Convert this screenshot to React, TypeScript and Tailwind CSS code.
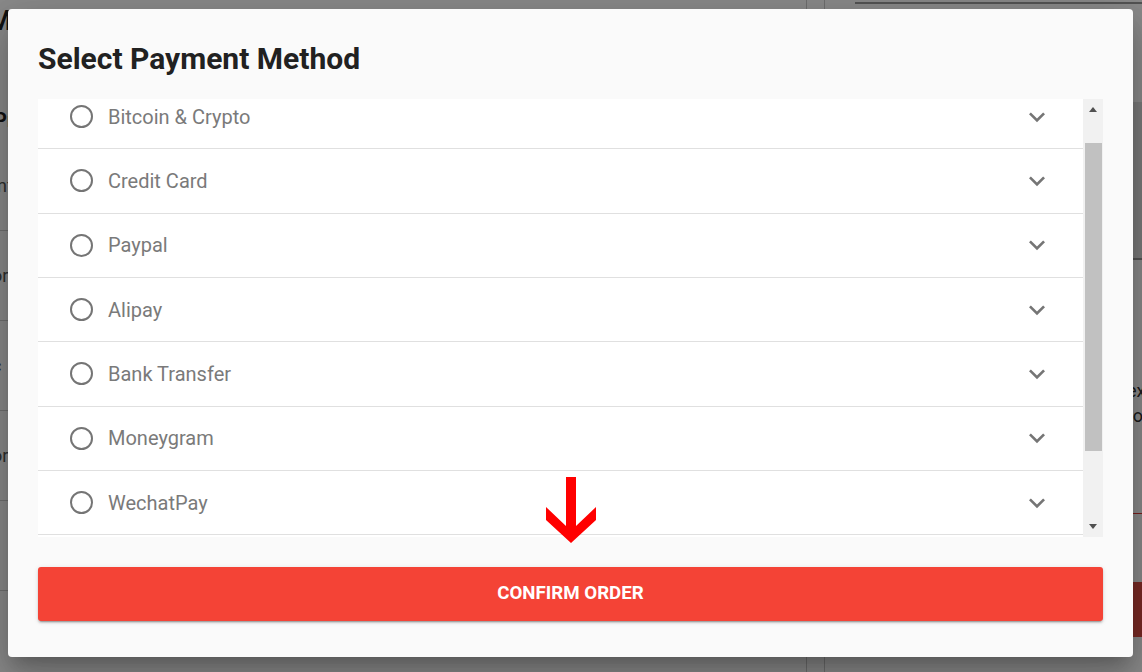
import React from "react";

const methods = [
  "Bitcoin & Crypto",
  "Credit Card",
  "Paypal",
  "Alipay",
  "Bank Transfer",
  "Moneygram",
  "WechatPay",
  "Western Union",
];

function Chevron() {
  return (
    <svg width="32" height="32" viewBox="0 0 24 24" className="shrink-0">
      <path d="M16.59 8.59L12 13.17 7.41 8.59 6 10l6 6 6-6z" fill="#757575" />
    </svg>
  );
}

function Row({ label }: { label: string }) {
  return (
    <div className="h-[64.33px] shrink-0 flex items-center bg-white border-b border-[#e0e0e0] pl-[32px] pr-[30px]">
      <div className="w-[23px] h-[23px] rounded-full border-2 border-[#757575] shrink-0" />
      <span className="ml-[15px] flex-1 text-[20px] text-[#7a7a7a] leading-none">{label}</span>
      <Chevron />
    </div>
  );
}

function BackgroundPage() {
  const leftRows = ["or", "c", "or", "t", "-", "x"];
  return (
    <div className="w-[1142px] h-[672px] bg-white flex overflow-hidden text-[#212121]">
      <div className="w-[807px] shrink-0 flex flex-col border-r border-[#cccccc]">
        <div className="h-[40px] shrink-0 flex items-center pt-[2px] -ml-[12px] text-[28px] font-bold">Ma commande</div>
        <div className="h-[60px] shrink-0" />
        <div className="h-[40px] shrink-0 flex items-center -ml-[6px] text-[20px] font-bold">Products</div>
        <div className="h-[90px] shrink-0 flex items-center -ml-[8px] text-[18px] text-[#555]">Info</div>
        {leftRows.map((t, i) => (
          <div key={i} className="h-[90px] shrink-0 flex items-center -ml-[8px] border-t border-[#cfcfcf] text-[18px] text-[#555]">
            {t}
          </div>
        ))}
      </div>
      <div className="w-[18px] shrink-0 border-r border-[#cccccc]" />
      <div className="flex-1 flex flex-col">
        <div className="h-[102px] shrink-0 pl-[30px] pt-[2px]">
          <div className="border-t-2 border-[#999]" />
        </div>
        <div className="h-[158px] shrink-0 bg-[#e4e4e4] border-b-2 border-[#999]" />
        <div className="h-[118px] shrink-0" />
        <div className="shrink-0 pl-[302px] text-[18px] leading-[25px] text-[#333]">
          <div>ex</div>
          <div>to</div>
        </div>
        <div className="h-[86px] shrink-0 border-b border-[#e53935]" />
        <div className="h-[68px] shrink-0" />
        <div className="h-[55px] shrink-0 bg-[#e24e45]" />
      </div>
    </div>
  );
}

export default function App() {
  return (
    <div className="relative w-[1142px] h-[672px] overflow-hidden font-['Roboto',sans-serif]">
      <BackgroundPage />
      <div className="absolute inset-0 bg-black/[0.46]" />
      <div className="absolute left-[8px] top-[9px] w-[1125px] h-[648px] bg-[#fafafa] rounded-[4px] shadow-[0_11px_15px_-7px_rgba(0,0,0,0.2),0_24px_38px_3px_rgba(0,0,0,0.14),0_9px_46px_8px_rgba(0,0,0,0.12)] flex flex-col pt-[32px] px-[30px]">
        <h2 className="h-[36px] leading-[36px] text-[30px] font-bold text-[#212121]">
          Select Payment Method
        </h2>
        <div className="mt-[22px] h-[438px] flex">
          <div className="flex-1 overflow-hidden flex flex-col">
            <div className="-mt-[14px] flex flex-col">
              {methods.map((m) => (
                <Row key={m} label={m} />
              ))}
            </div>
          </div>
          <div className="w-[20px] shrink-0 bg-[#f1f1f1] flex flex-col items-center">
            <div className="h-[44px] w-full flex justify-center pt-[8px]">
              <div className="w-0 h-0 border-l-[4px] border-r-[4px] border-b-[5px] border-l-transparent border-r-transparent border-b-[#505050]" />
            </div>
            <div className="w-[17px] h-[308px] bg-[#c1c1c1]" />
            <div className="flex-1 w-full flex justify-center items-end pb-[8px]">
              <div className="w-0 h-0 border-l-[4px] border-r-[4px] border-t-[5px] border-l-transparent border-r-transparent border-t-[#505050]" />
            </div>
          </div>
        </div>
        <button className="mt-[30px] h-[54px] w-full bg-[#f44336] rounded-[3px] text-white text-[18.7px] font-bold leading-none pb-[2px] shadow-[0_3px_1px_-2px_rgba(0,0,0,0.2),0_2px_2px_0_rgba(0,0,0,0.14),0_1px_5px_0_rgba(0,0,0,0.12)]">
          CONFIRM ORDER
        </button>
        <svg
          className="absolute left-[538px] top-[468px]"
          width="50"
          height="66"
          viewBox="0 0 50 66"
        >
          <polygon points="20,0 30,0 30,49 50,30 50,43 25,66 0,43 0,30 20,49" fill="#ff0000" />
        </svg>
      </div>
    </div>
  );
}
